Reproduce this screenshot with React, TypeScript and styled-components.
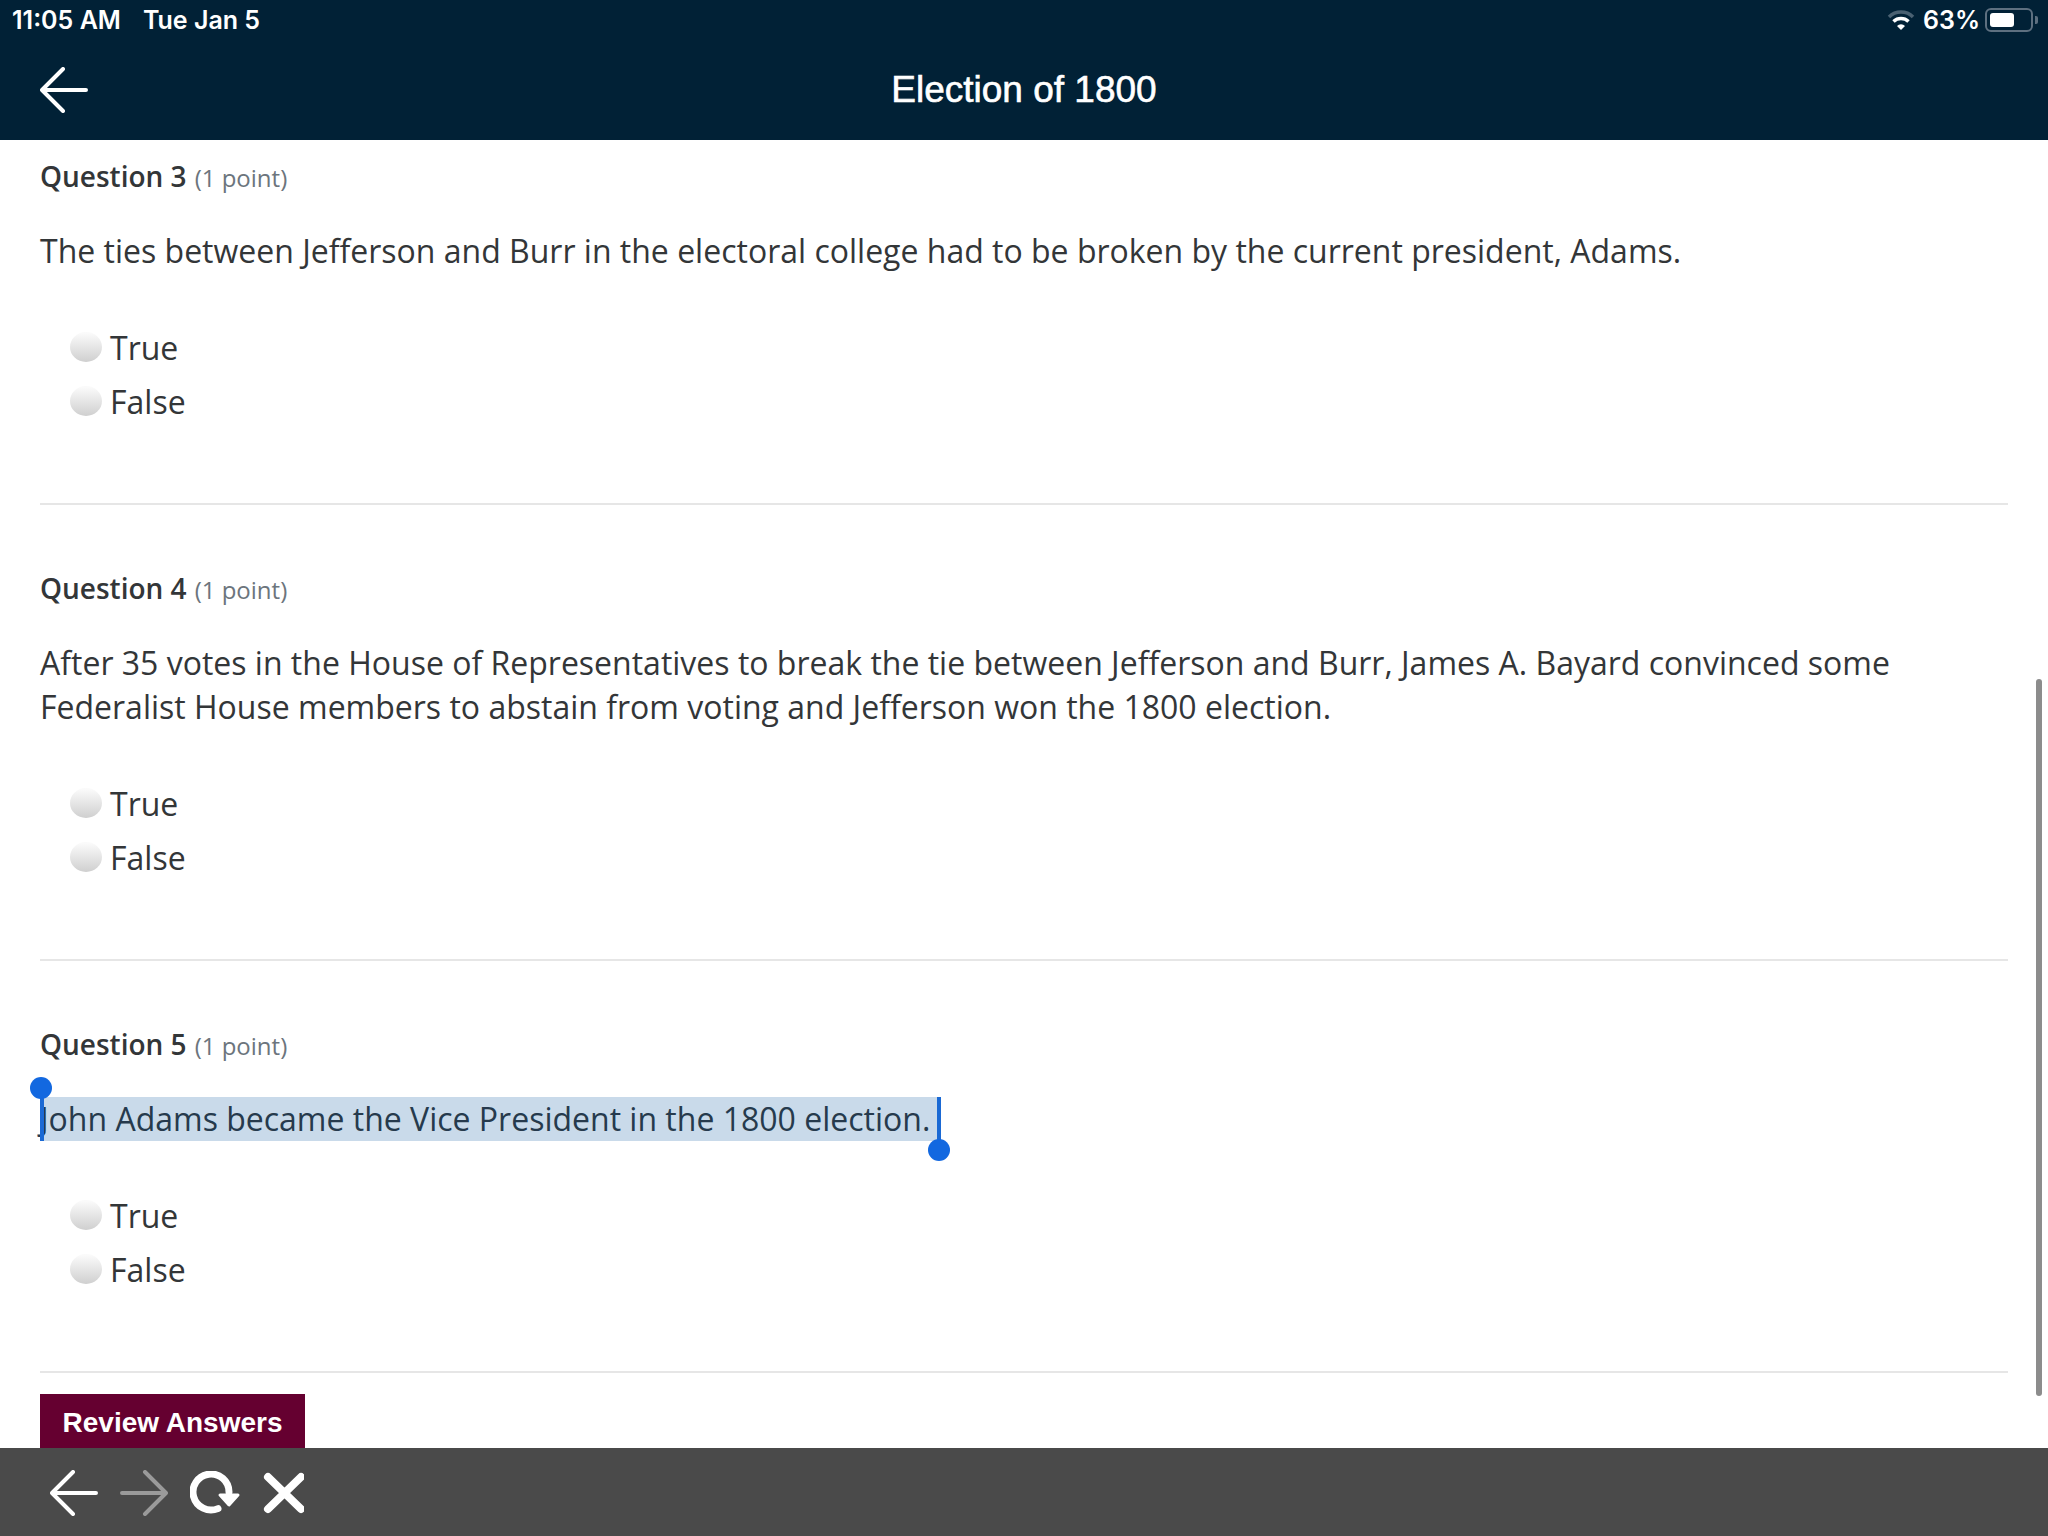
import React from 'react'
import styled, { createGlobalStyle } from 'styled-components'

const GlobalStyle = createGlobalStyle`
    html, body {
        margin: 0;
        padding: 0;
        background: #ffffff;
    }
`;

const Page = styled.div`
    position: relative;
    display: flex;
    flex-direction: column;
    width: 2048px;
    height: 1536px;
    overflow: hidden;
    font-family: 'Open Sans', sans-serif;
    color: #333638;
`;

const Header = styled.header`
    flex: none;
    height: 140px;
    box-sizing: border-box;
    background: #012136;
    color: #ffffff;
    display: flex;
    flex-direction: column;
`;

const StatusBar = styled.div`
    height: 40px;
    display: flex;
    align-items: center;
    justify-content: space-between;
    padding: 0 10px 0 12px;
    font-family: 'Inter', sans-serif;
    font-weight: 600;
    font-size: 25px;
`;

const StatusGroup = styled.div`
    display: flex;
    align-items: center;
    gap: ${(p: { $gap: number }) => p.$gap}px;
`;

const TitleRow = styled.div`
    position: relative;
    flex: 1;
    display: flex;
    align-items: center;
    justify-content: center;
`;

const BackButton = styled.div`
    position: absolute;
    left: 40px;
    top: 27px;
    display: flex;
`;

const Title = styled.h1`
    margin: 0;
    font-family: 'Liberation Sans', sans-serif;
    font-weight: 400;
    font-size: 37px;
    -webkit-text-stroke: 0.6px #ffffff;
`;

const Main = styled.main`
    position: relative;
    flex: 1;
    min-height: 0;
    overflow: hidden;
    padding: 17px 40px 0;
`;

const Question = styled.section`
    border-bottom: 2px solid #e6e6e6;
    padding-bottom: 75px;
    margin-bottom: ${(p: { $last?: boolean }) => (p.$last ? '21px' : '64px')};
`;

const QuestionLabel = styled.div`
    font-size: 28px;
    line-height: 38px;
    font-weight: 600;
    color: #333638;
`;

const Points = styled.span`
    font-size: 24px;
    font-weight: 400;
    color: #6c757d;
    margin-left: 8px;
`;

const Prompt = styled.p`
    margin: 32px 0 0;
    font-size: 32px;
    line-height: 44px;
    color: #333638;
`;

const Selected = styled.span`
    position: relative;
    display: inline-block;
    background: #c9daea;
    color: #263a4d;
`;

const Caret = styled.i`
    position: absolute;
    top: 0;
    bottom: 0;
    width: 4px;
    background: #1a69d4;
    ${(p: { $end?: boolean }) => (p.$end ? 'right: -2px;' : 'left: 0;')}
`;

const Knob = styled.i`
    position: absolute;
    width: 22px;
    height: 22px;
    border-radius: 50%;
    background: #1268e0;
    ${(p: { $end?: boolean }) =>
        p.$end ? 'right: -11px; bottom: -20px;' : 'left: -10px; top: -20px;'}
`;

const Options = styled.div`
    margin-top: 47px;
    padding-left: 30px;
    display: flex;
    flex-direction: column;
`;

const Option = styled.label`
    display: flex;
    align-items: center;
    gap: 8px;
    height: 54px;
    font-size: 32px;
`;

const Radio = styled.span`
    width: 32px;
    height: 30px;
    border-radius: 50%;
    background: linear-gradient(180deg, #fafafa 5%, #cfcfcf 100%);
`;

const ReviewButton = styled.button`
    display: block;
    width: 265px;
    height: 75px;
    padding: 0 0 17px;
    border: none;
    border-radius: 0;
    background: #650030;
    color: #ffffff;
    font-family: 'Liberation Sans', sans-serif;
    font-weight: 700;
    font-size: 28px;
`;

const ScrollThumb = styled.div`
    position: absolute;
    right: 6px;
    top: 539px;
    width: 6px;
    height: 717px;
    border-radius: 3px;
    background: #8c8c8c;
`;

const Footer = styled.footer`
    flex: none;
    height: 88px;
    box-sizing: border-box;
    background: #4a4a4a;
    display: flex;
    align-items: center;
    gap: 22px;
    padding: 2px 0 0 50px;
`;

const Battery = styled.div`
    display: flex;
    align-items: center;
    gap: 2px;
    margin-left: -3px;
`;

const BatteryShell = styled.div`
    box-sizing: border-box;
    width: 48px;
    height: 24px;
    padding: 3px;
    border: 2px solid #5e7080;
    border-radius: 6px;
`;

const BatteryFill = styled.div`
    width: 63%;
    height: 100%;
    border-radius: 3px;
    background: #ffffff;
`;

const BatteryTip = styled.div`
    width: 3px;
    height: 8px;
    border-radius: 0 2px 2px 0;
    background: #5e7080;
`;

const Arrow = ({ dir = 'left', color = '#ffffff' }: { dir?: 'left' | 'right'; color?: string }) => (
    <svg width="48" height="46" viewBox="0 0 48 46" fill="none" stroke={color} strokeWidth="4" strokeLinecap="round" strokeLinejoin="round">
        {dir === 'left'
            ? <path d="M46 23H3M23 2 2 23l21 21" />
            : <path d="M2 23h43M25 2l21 21-21 21" />}
    </svg>
)

const Refresh = () => (
    <svg width="50" height="44" viewBox="0 0 50 44" fill="none">
        <path d="M28 37.6A18 18 0 1 1 39 21" stroke="#ffffff" strokeWidth="7" strokeLinecap="round" />
        <path d="M30 24h18L39 34Z" fill="#ffffff" stroke="#ffffff" strokeWidth="3" strokeLinejoin="round" />
    </svg>
)

const Close = () => (
    <svg width="42" height="42" viewBox="0 0 42 42" fill="none" stroke="#ffffff" strokeWidth="8" strokeLinecap="round">
        <path d="M6 5l33 32M39 5 6 37" />
    </svg>
)

const Wifi = () => (
    <svg width="28" height="22" viewBox="0 0 28 22" fill="none" strokeLinecap="butt">
        <path d="M2 8a17 17 0 0 1 24 0" stroke="#4a6172" strokeWidth="3.5" />
        <path d="M6.5 12.5a11 11 0 0 1 15 0" stroke="#ffffff" strokeWidth="3.5" />
        <path d="M10 17l4 4 4-4a5.6 5.6 0 0 0-8 0Z" fill="#ffffff" />
    </svg>
)

const Choices = () => (
    <Options>
        <Option><Radio />True</Option>
        <Option><Radio />False</Option>
    </Options>
)

const App: React.FC = () => {
  return (
    <Page>
        <GlobalStyle />
        <Header>
            <StatusBar>
                <StatusGroup $gap={22}>
                    <span>11:05 AM</span>
                    <span>Tue Jan 5</span>
                </StatusGroup>
                <StatusGroup $gap={8}>
                    <Wifi />
                    <span>63%</span>
                    <Battery>
                        <BatteryShell><BatteryFill /></BatteryShell>
                        <BatteryTip />
                    </Battery>
                </StatusGroup>
            </StatusBar>
            <TitleRow>
                <BackButton><Arrow /></BackButton>
                <Title>Election of 1800</Title>
            </TitleRow>
        </Header>
        <Main>
            <Question>
                <QuestionLabel>Question 3<Points>(1 point)</Points></QuestionLabel>
                <Prompt>The ties between Jefferson and Burr in the electoral college had to be broken by the current president, Adams.</Prompt>
                <Choices />
            </Question>
            <Question>
                <QuestionLabel>Question 4<Points>(1 point)</Points></QuestionLabel>
                <Prompt>After 35 votes in the House of Representatives to break the tie between Jefferson and Burr, James A. Bayard convinced some Federalist House members to abstain from voting and Jefferson won the 1800 election.</Prompt>
                <Choices />
            </Question>
            <Question $last>
                <QuestionLabel>Question 5<Points>(1 point)</Points></QuestionLabel>
                <Prompt>
                    <Selected>
                        <Caret /><Knob />
                        John Adams became the Vice President in the 1800 election.&nbsp;
                        <Caret $end /><Knob $end />
                    </Selected>
                </Prompt>
                <Choices />
            </Question>
            <ReviewButton>Review Answers</ReviewButton>
            <ScrollThumb />
        </Main>
        <Footer>
            <Arrow />
            <Arrow dir="right" color="#9a9a9a" />
            <Refresh />
            <Close />
        </Footer>
    </Page>
)
}

export default App
